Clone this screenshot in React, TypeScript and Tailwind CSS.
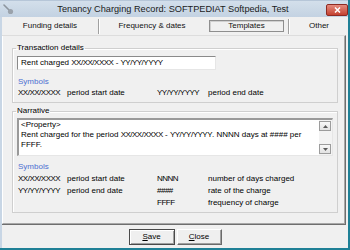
import type { ReactNode } from "react";

function TitleBar() {
  return (
    <div className="h-[17px] flex items-center bg-gradient-to-b from-[#d3dfeb] to-[#c3d2e2] border-t border-[#b6c6d8]">
      <svg className="ml-[3px] w-[11px] h-[11px] shrink-0" viewBox="0 0 11 11">
        <path d="M1 1 L6 6" stroke="#8d959e" strokeWidth="1.6" strokeLinecap="round" />
        <circle cx="7.5" cy="7.5" r="2.6" fill="#9aa2ab" />
      </svg>
      <div className="flex-1 text-center text-[9.2px] leading-[12px] text-[#1b1b1b] pl-[6px]">
        Tenancy Charging Record: SOFTPEDIAT Softpedia, Test
      </div>
      <div className="w-[22px] h-[12px] mt-[2px] rounded-[2px] border border-[#8e2a22] bg-gradient-to-b from-[#e48a7e] to-[#c4402f] flex items-center justify-center">
        <svg className="w-[7px] h-[6px]" viewBox="0 0 7 6">
          <path d="M1 0.5 L6 5.5 M6 0.5 L1 5.5" stroke="#fff" strokeWidth="1.5" />
        </svg>
      </div>
    </div>
  );
}

// X and Y glyphs are narrower in the original dialog font
function N({ children }: { children: ReactNode }) {
  return <span className="tracking-[-0.5px]">{children}</span>;
}

function Sep() {
  return <div className="w-[2px] h-[15px] border-l border-[#a0a0a0] border-r border-r-white shrink-0" />;
}

function Tabs() {
  return (
    <div className="h-[18px] flex items-center text-[8px] text-[#111]">
      <div className="w-[96px] text-center">Funding details</div>
      <Sep />
      <div className="w-[104px] text-center">Frequency &amp; dates</div>
      <div className="w-[84px] flex pl-[5px]">
        <div className="w-[75px] h-[12px] flex items-center justify-center border border-[#8e8e8e] shadow-[inset_1px_1px_0_#d0d0d0]">
          Templates
        </div>
      </div>
      <Sep />
      <div className="flex-1 text-center">Other</div>
    </div>
  );
}

function Group({ title, className, children }: { title: string; className?: string; children: ReactNode }) {
  return (
    <fieldset className={`ml-[9px] w-[326px] border border-[#cfcfcf] shadow-[inset_1px_1px_0_#fff] pl-[4px] pr-[3px] ${className ?? ""}`}>
      <legend className="px-[1px] -ml-[1px] leading-[10px]">{title}</legend>
      {children}
    </fieldset>
  );
}

function Symbols({ rows }: { rows: string[][] }) {
  return (
    <div>
      <div className="pl-[1px] text-[#4c6fd0] leading-[10px]">Symbols</div>
      <div className="mt-[1px] pl-[1px] grid grid-cols-[49px_90px_51px_1fr]">
        {rows.map((r, i) =>
          r.map((c, j) => (
            <div key={`${i}-${j}`} className={rows.length > 1 ? "leading-[12px]" : "leading-[10px]"}>
              {j % 2 === 0 ? <N>{c}</N> : c}
            </div>
          ))
        )}
      </div>
    </div>
  );
}

function ScrollBtn({ up }: { up?: boolean }) {
  return (
    <div className="h-[10px] w-[12px] border border-[#9c9c9c] bg-gradient-to-b from-[#f8f8f8] to-[#e2e2e2] flex items-center justify-center">
      <svg className="w-[5px] h-[3px]" viewBox="0 0 5 3">
        <path d={up ? "M0 3 L2.5 0 L5 3 Z" : "M0 0 L2.5 3 L5 0 Z"} fill="#5a5a5a" />
      </svg>
    </div>
  );
}

function Panel() {
  return (
    <div className="h-[190px] w-[344px] border-t border-[#dddddd] border-r border-b border-r-[#6e6e6e] border-b-[#6e6e6e]">
      <div className="h-full border-r border-b border-[#a8a8a8] border-l border-l-white pt-[7px]">
        <Group title="Transaction details" className="pb-[4px]">
          <div className="mt-[3px] w-[199px] h-[14px] bg-white border-t border-l border-[#8a8a8a] border-r border-b border-r-[#e6e6e6] border-b-[#e6e6e6] pl-[3px] leading-[12px]">
            Rent charged <N>XX/XX/XXXX</N> - <N>YY/YY/YYYY</N>
          </div>
          <div className="mt-[7px]">
            <Symbols rows={[["XX/XX/XXXX", "period start date", "YY/YY/YYYY", "period end date"]]} />
          </div>
        </Group>

        <Group title="Narrative" className="mt-[3px] pb-[3px]">
          <div className="mt-[2px] w-[316px] h-[38px] flex bg-white border-t-2 border-l-2 border-[#9a9a9a] border-r border-b border-r-[#e6e6e6] border-b-[#e6e6e6]">
            <div className="flex-1 pl-[2px] leading-[10px]">
              <div>&lt;Property&gt;</div>
              <div>
                Rent charged for the period <N>XX/XX/XXXX</N> - <N>YY/YY/YYYY</N>. NNNN days at #### per
              </div>
              <div>FFFF.</div>
            </div>
            <div className="w-[13px] py-[1px] flex flex-col justify-between bg-[#f3f3f3]">
              <ScrollBtn up />
              <ScrollBtn />
            </div>
          </div>
          <div className="mt-[6px]">
            <Symbols
              rows={[
                ["XX/XX/XXXX", "period start date", "NNNN", "number of days charged"],
                ["YY/YY/YYYY", "period end date", "####", "rate of the charge"],
                ["", "", "FFFF", "frequency of charge"],
              ]}
            />
          </div>
        </Group>
      </div>
    </div>
  );
}

function Buttons() {
  return (
    <div className="flex-1 flex justify-center gap-[2px] pt-[4px] text-[8px]">
      <button className="w-[46px] h-[16px] border border-[#4a4a4a] bg-[#efefef] shadow-[inset_1px_1px_0_#fff,inset_-1px_-1px_0_#a0a0a0] flex items-center justify-center leading-[10px]">
        <span><u>S</u>ave</span>
      </button>
      <button className="w-[45px] h-[16px] border-t border-l border-white border-r border-b border-r-[#6a6a6a] border-b-[#6a6a6a] bg-[#efefef] shadow-[inset_-1px_-1px_0_#a0a0a0] flex items-center justify-center leading-[10px]">
        <span><u>C</u>lose</span>
      </button>
    </div>
  );
}

export default function App() {
  return (
    <div className="w-[350px] h-[250px] overflow-hidden flex flex-col bg-[#c8d6e5] border-r-2 border-b-2 border-[#1f8096] font-['Liberation_Sans',Arial,sans-serif] text-[8px] leading-[10px] text-black">
      <TitleBar />
      <div className="flex-1 flex flex-col ml-[2px] bg-[#f0f0f0]">
        <Tabs />
        <Panel />
        <Buttons />
      </div>
    </div>
  );
}
